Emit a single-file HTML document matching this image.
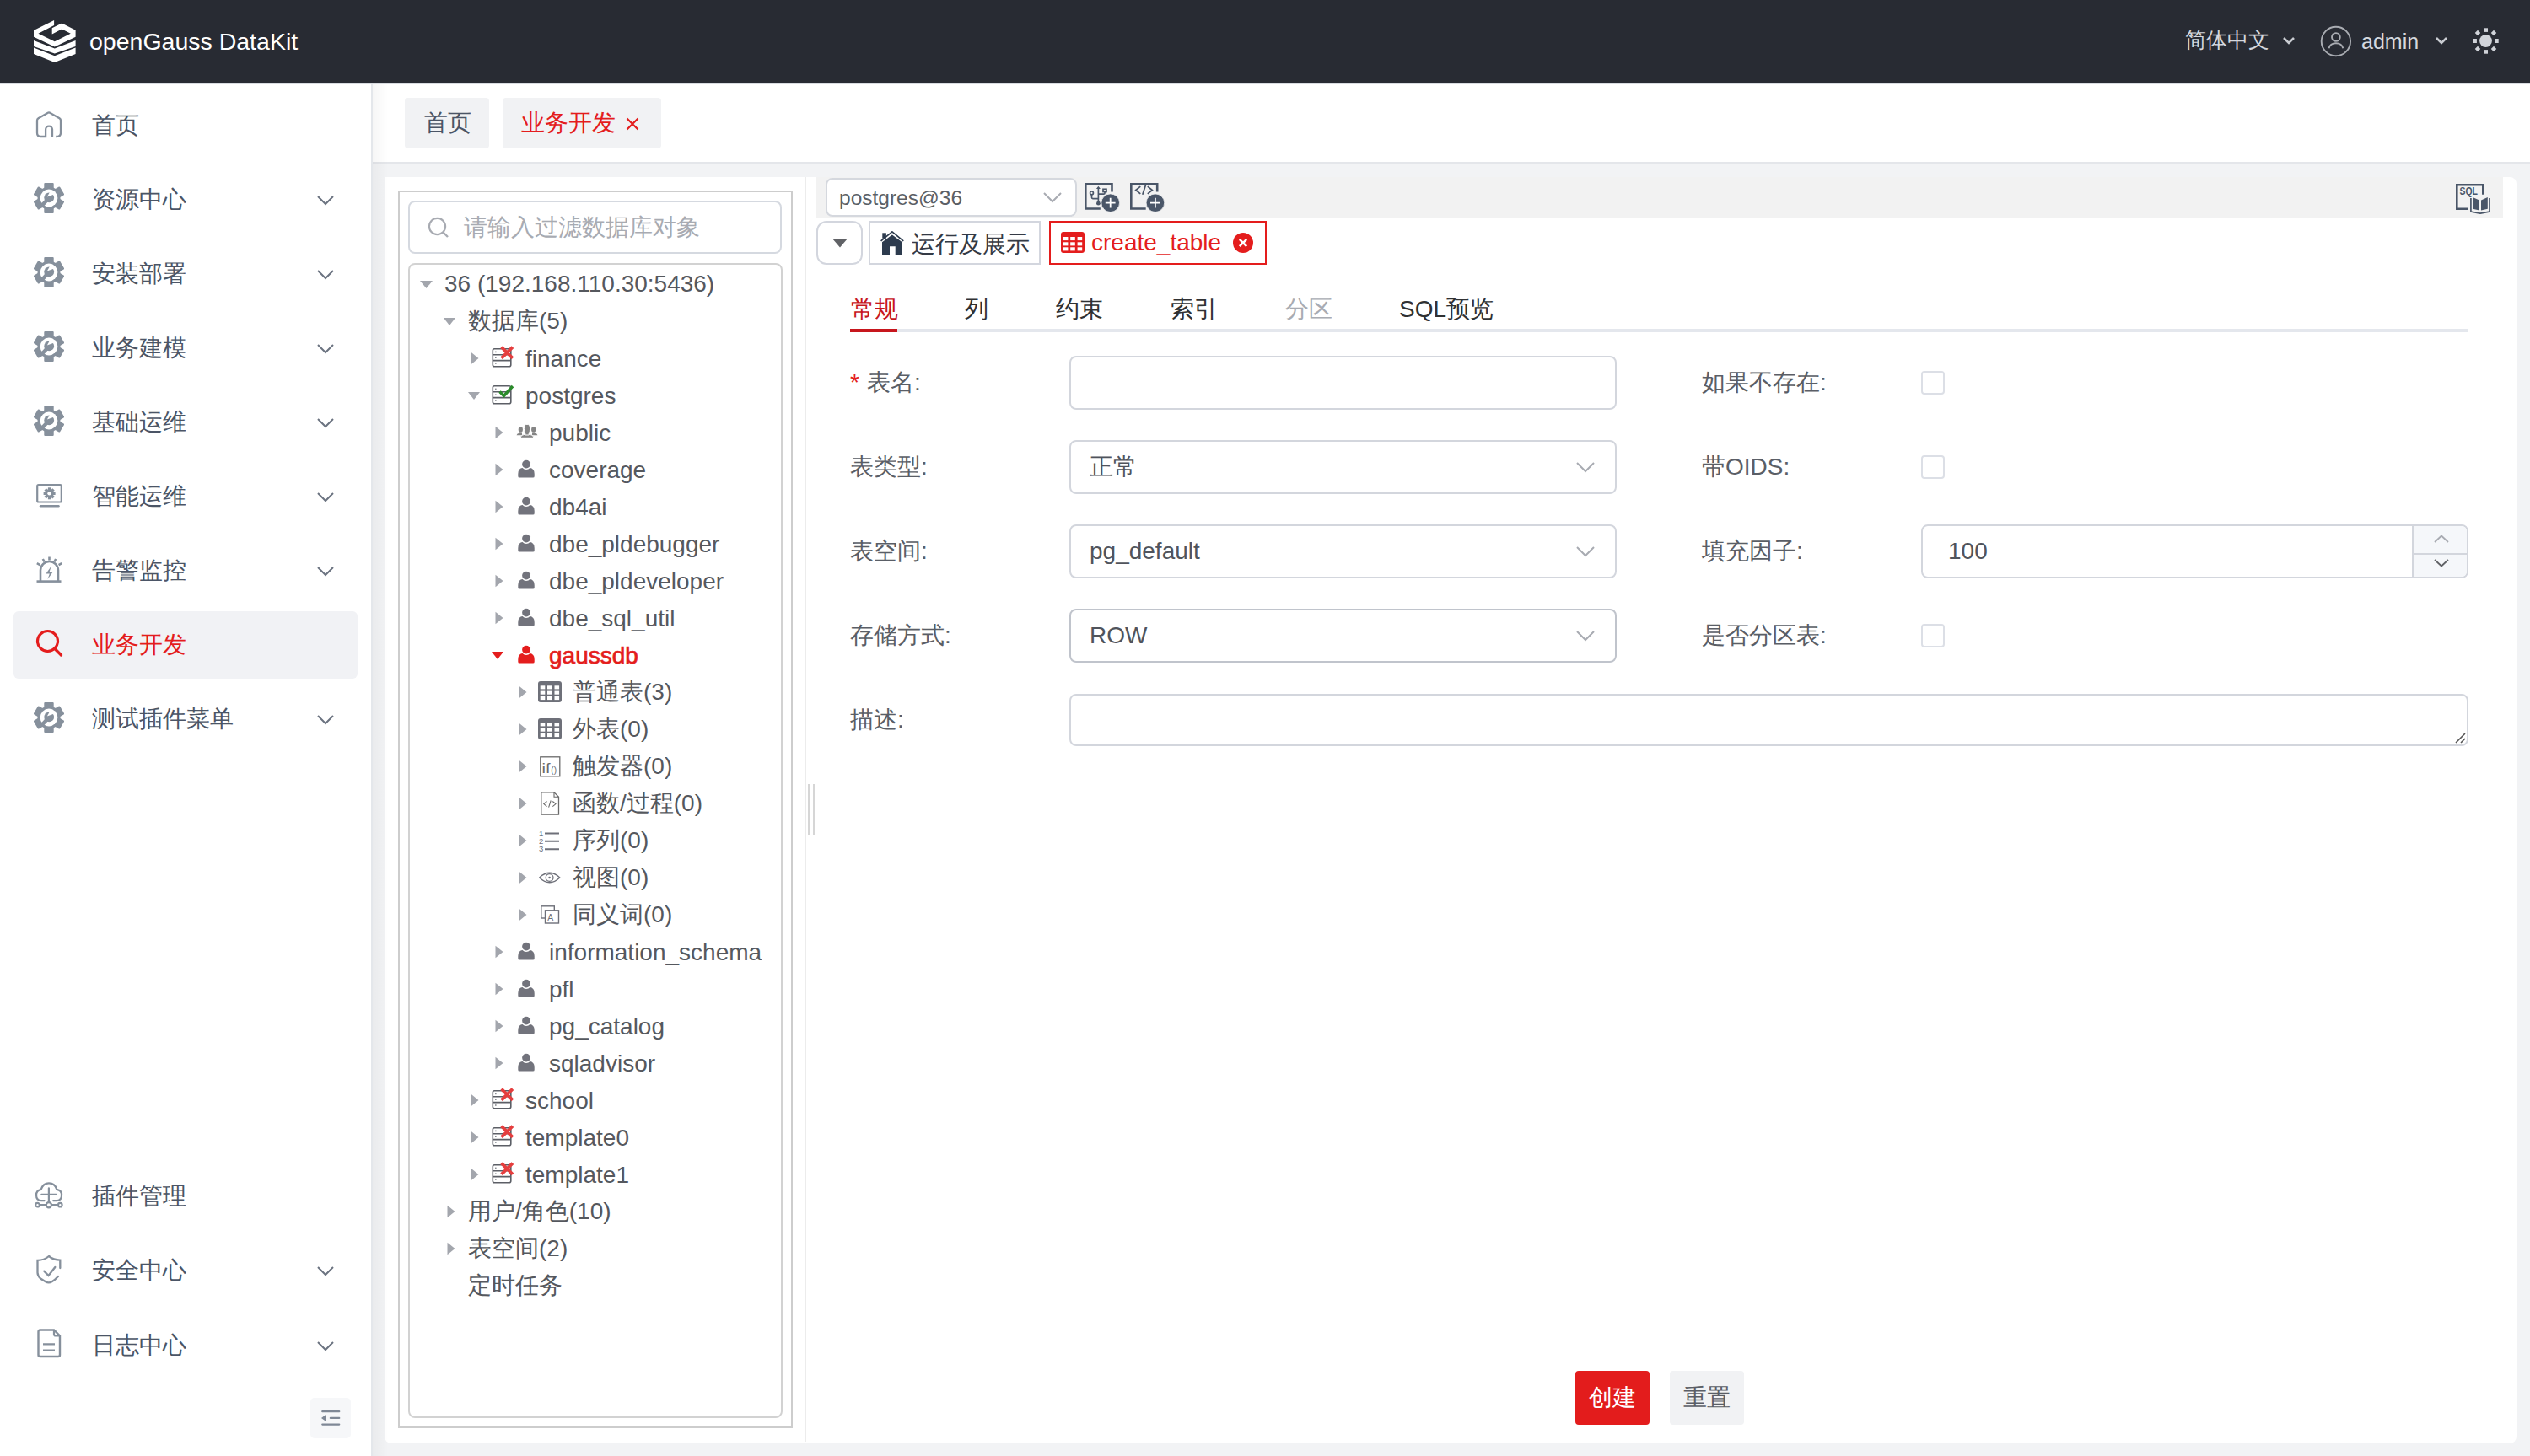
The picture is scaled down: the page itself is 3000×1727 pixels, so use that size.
<!DOCTYPE html>
<html><head><meta charset="utf-8">
<style>
*{box-sizing:border-box;}
html,body{margin:0;padding:0;}
body{width:3000px;height:1727px;overflow:hidden;position:relative;background:#f2f3f5;font-family:"Liberation Sans",sans-serif;color:#4b5566;}
.abs{position:absolute;}
#hdr{left:0;top:0;width:3000px;height:98px;background:#282b33;z-index:5;}
#hdrline{left:0;top:98px;width:3000px;height:2px;background:#d8dbe0;z-index:5;}
#side{left:0;top:0;width:440px;height:1727px;background:#fff;}
#sideline{left:440px;top:100px;width:2px;height:1627px;background:#e4e7eb;}
#sideshadow{left:442px;top:100px;width:18px;height:1627px;background:linear-gradient(to right,rgba(0,0,0,0.035),rgba(0,0,0,0));z-index:3;}
.mi{position:absolute;left:0;width:440px;height:80px;}
.mi .ic{position:absolute;left:40px;top:20px;width:36px;height:36px;}
.mi .tx{position:absolute;left:109px;top:18px;font-size:28px;line-height:44px;color:#4b5566;white-space:nowrap;}
.mi .ch{position:absolute;left:376px;top:35px;width:20px;height:12px;}
#tabbar{left:442px;top:100px;width:2558px;height:92px;background:#fff;}
#tabline{left:442px;top:192px;width:2558px;height:2px;background:#e4e6ea;}
.ptab{position:absolute;top:116px;height:60px;background:#f1f2f4;border-radius:4px;font-size:28px;line-height:60px;}
#panel{left:456px;top:210px;width:2528px;height:1502px;background:#fff;border-radius:0 8px 8px 8px;}

.tt{font-size:28px;line-height:44px;white-space:nowrap;}
.lbl{position:absolute;font-size:28px;line-height:44px;color:#5a5e66;white-space:nowrap;}
.inp{position:absolute;background:#fff;border:2px solid #d3d6dd;border-radius:8px;}
.val{position:absolute;font-size:28px;line-height:44px;color:#50545c;white-space:nowrap;}
.cb{position:absolute;width:28px;height:28px;border:2px solid #dcdfe6;border-radius:4px;background:#fff;}
.stab{position:absolute;top:345px;font-size:28px;line-height:44px;color:#303133;white-space:nowrap;}
</style></head><body>
<div id="hdr" class="abs"><svg class="abs" style="left:40px;top:24px" width="50" height="50" viewBox="0 0 50 50"><g fill="#fff">
<path d="M24.1 0 L0 12.05 V19.8 L24.8 31.6 L49.6 19.8 V11.7 L33.3 3.55 L21.7 9.35 V16.5 L33.3 10.4 L43.8 15.75 L24.8 25.3 L5.4 15.7 L24.1 6.1 Z"/>
<path d="M0 23.9 V30.9 L24.8 39.6 L49.6 30.9 V23.9 L24.8 33.4 Z"/>
<path d="M0 32.6 V40 L24.8 50 L49.6 40 V32.6 L24.8 42.3 Z"/>
</g></svg><div class="abs" style="left:106px;top:27px;font-size:28.5px;line-height:44px;color:#fff;white-space:nowrap;">openGauss DataKit</div><div class="abs" style="left:2591px;top:26px;font-size:24.5px;line-height:44px;color:#d5d8de;white-space:nowrap;">简体中文</div><svg class="abs" style="left:2706px;top:43px" width="16" height="11" viewBox="0 0 16 11"><path d="M2 2 L8 8 L14 2" fill="none" stroke="#c9ccd2" stroke-width="2.6"/></svg><svg class="abs" style="left:2750px;top:29px" width="39" height="39" viewBox="0 0 39 39"><circle cx="19.9" cy="20" r="17.2" fill="none" stroke="#a9acb2" stroke-width="1.9"/><circle cx="19.9" cy="15" r="4.9" fill="none" stroke="#a9acb2" stroke-width="1.9"/><path d="M11.5 28.2 Q13 22.2 19.9 22.2 Q26.8 22.2 28.3 28.2" fill="none" stroke="#a9acb2" stroke-width="1.9"/></svg><div class="abs" style="left:2800px;top:27px;font-size:25px;line-height:44px;color:#d5d8de;white-space:nowrap;">admin</div><svg class="abs" style="left:2887px;top:43px" width="16" height="11" viewBox="0 0 16 11"><path d="M2 2 L8 8 L14 2" fill="none" stroke="#c9ccd2" stroke-width="2.6"/></svg><svg class="abs" style="left:2931px;top:32px" width="34" height="34" viewBox="0 0 34 34"><g fill="#d0d3d9"><circle cx="16.5" cy="16.5" r="7.4"/><rect x="14" y="1.3" width="5" height="4.6"/><rect x="14" y="27.1" width="5" height="4.6"/><rect x="1.3" y="14" width="4.6" height="5"/><rect x="27.1" y="14" width="4.6" height="5"/><rect x="4.7" y="4.7" width="4.6" height="4.6" transform="rotate(45 7 7)"/><rect x="23.7" y="4.7" width="4.6" height="4.6" transform="rotate(45 26 7)"/><rect x="4.7" y="23.7" width="4.6" height="4.6" transform="rotate(45 7 26)"/><rect x="23.7" y="23.7" width="4.6" height="4.6" transform="rotate(45 26 26)"/></g></svg></div>
<div id="hdrline" class="abs"></div>
<div id="side" class="abs"><div class="mi" style="top:109px;"><svg class="ic" style="left:40px;top:20px" viewBox="0 0 36 36"><path d="M22 33.2 V24.6 A3.95 3.95 0 0 0 14.1 24.6 V33 H8.2 Q4 33 4 28.8 V13.8 Q4 12.2 5.5 11.3 L16.4 4.9 Q18 4 19.6 4.9 L30.5 11.3 Q32 12.2 32 13.8 V28.5 Q32 33 27.2 33 H26.2" fill="none" stroke="#86909c" stroke-width="2.3"/></svg><div class="tx">首页</div></div><div class="mi" style="top:197px;"><svg class="ic" viewBox="0 0 36 36"><g fill="#86909c"><circle cx="18" cy="18" r="13.5"/>
<rect x="12.3" y="0" width="11.4" height="8" rx="1"/><rect x="12.3" y="28" width="11.4" height="8" rx="1"/>
<rect x="12.3" y="0" width="11.4" height="8" rx="1" transform="rotate(60 18 18)"/><rect x="12.3" y="0" width="11.4" height="8" rx="1" transform="rotate(120 18 18)"/>
<rect x="12.3" y="0" width="11.4" height="8" rx="1" transform="rotate(240 18 18)"/><rect x="12.3" y="0" width="11.4" height="8" rx="1" transform="rotate(300 18 18)"/></g>
<circle cx="18" cy="18" r="10.4" fill="#fff"/>
<circle cx="18.2" cy="17.4" r="5.9" fill="#86909c"/><path d="M15.9 16.6 L19.3 10.2 L25.5 10.5 L25 13.3 Z" fill="#fff"/>
<path d="M16.5 19.5 L9.5 27" stroke="#86909c" stroke-width="4.4" stroke-linecap="butt"/>
</svg><div class="tx">资源中心</div><svg class="ch" viewBox="0 0 20 12"><path d="M1 1 L10 10 L19 1" fill="none" stroke="#6b7380" stroke-width="2"/></svg></div><div class="mi" style="top:285px;"><svg class="ic" viewBox="0 0 36 36"><g fill="#86909c"><circle cx="18" cy="18" r="13.5"/>
<rect x="12.3" y="0" width="11.4" height="8" rx="1"/><rect x="12.3" y="28" width="11.4" height="8" rx="1"/>
<rect x="12.3" y="0" width="11.4" height="8" rx="1" transform="rotate(60 18 18)"/><rect x="12.3" y="0" width="11.4" height="8" rx="1" transform="rotate(120 18 18)"/>
<rect x="12.3" y="0" width="11.4" height="8" rx="1" transform="rotate(240 18 18)"/><rect x="12.3" y="0" width="11.4" height="8" rx="1" transform="rotate(300 18 18)"/></g>
<circle cx="18" cy="18" r="10.4" fill="#fff"/>
<circle cx="18.2" cy="17.4" r="5.9" fill="#86909c"/><path d="M15.9 16.6 L19.3 10.2 L25.5 10.5 L25 13.3 Z" fill="#fff"/>
<path d="M16.5 19.5 L9.5 27" stroke="#86909c" stroke-width="4.4" stroke-linecap="butt"/>
</svg><div class="tx">安装部署</div><svg class="ch" viewBox="0 0 20 12"><path d="M1 1 L10 10 L19 1" fill="none" stroke="#6b7380" stroke-width="2"/></svg></div><div class="mi" style="top:373px;"><svg class="ic" viewBox="0 0 36 36"><g fill="#86909c"><circle cx="18" cy="18" r="13.5"/>
<rect x="12.3" y="0" width="11.4" height="8" rx="1"/><rect x="12.3" y="28" width="11.4" height="8" rx="1"/>
<rect x="12.3" y="0" width="11.4" height="8" rx="1" transform="rotate(60 18 18)"/><rect x="12.3" y="0" width="11.4" height="8" rx="1" transform="rotate(120 18 18)"/>
<rect x="12.3" y="0" width="11.4" height="8" rx="1" transform="rotate(240 18 18)"/><rect x="12.3" y="0" width="11.4" height="8" rx="1" transform="rotate(300 18 18)"/></g>
<circle cx="18" cy="18" r="10.4" fill="#fff"/>
<circle cx="18.2" cy="17.4" r="5.9" fill="#86909c"/><path d="M15.9 16.6 L19.3 10.2 L25.5 10.5 L25 13.3 Z" fill="#fff"/>
<path d="M16.5 19.5 L9.5 27" stroke="#86909c" stroke-width="4.4" stroke-linecap="butt"/>
</svg><div class="tx">业务建模</div><svg class="ch" viewBox="0 0 20 12"><path d="M1 1 L10 10 L19 1" fill="none" stroke="#6b7380" stroke-width="2"/></svg></div><div class="mi" style="top:461px;"><svg class="ic" viewBox="0 0 36 36"><g fill="#86909c"><circle cx="18" cy="18" r="13.5"/>
<rect x="12.3" y="0" width="11.4" height="8" rx="1"/><rect x="12.3" y="28" width="11.4" height="8" rx="1"/>
<rect x="12.3" y="0" width="11.4" height="8" rx="1" transform="rotate(60 18 18)"/><rect x="12.3" y="0" width="11.4" height="8" rx="1" transform="rotate(120 18 18)"/>
<rect x="12.3" y="0" width="11.4" height="8" rx="1" transform="rotate(240 18 18)"/><rect x="12.3" y="0" width="11.4" height="8" rx="1" transform="rotate(300 18 18)"/></g>
<circle cx="18" cy="18" r="10.4" fill="#fff"/>
<circle cx="18.2" cy="17.4" r="5.9" fill="#86909c"/><path d="M15.9 16.6 L19.3 10.2 L25.5 10.5 L25 13.3 Z" fill="#fff"/>
<path d="M16.5 19.5 L9.5 27" stroke="#86909c" stroke-width="4.4" stroke-linecap="butt"/>
</svg><div class="tx">基础运维</div><svg class="ch" viewBox="0 0 20 12"><path d="M1 1 L10 10 L19 1" fill="none" stroke="#6b7380" stroke-width="2"/></svg></div><div class="mi" style="top:549px;"><svg class="ic" viewBox="0 0 36 36"><rect x="4.2" y="6" width="28.6" height="20.5" rx="1.5" fill="none" stroke="#86909c" stroke-width="2.2"/><path d="M8 31.2 H29.5" stroke="#86909c" stroke-width="2.4" stroke-linecap="round"/><g transform="translate(18.6 16.3)" fill="#86909c"><circle r="5"/><rect x="-1.7" y="-7" width="3.4" height="14"/><rect x="-1.7" y="-7" width="3.4" height="14" transform="rotate(45)"/><rect x="-1.7" y="-7" width="3.4" height="14" transform="rotate(90)"/><rect x="-1.7" y="-7" width="3.4" height="14" transform="rotate(135)"/></g><circle cx="18.6" cy="16.3" r="2.3" fill="#fff"/></svg><div class="tx">智能运维</div><svg class="ch" viewBox="0 0 20 12"><path d="M1 1 L10 10 L19 1" fill="none" stroke="#6b7380" stroke-width="2"/></svg></div><div class="mi" style="top:637px;"><svg class="ic" viewBox="0 0 36 36"><path d="M8 32 V19.5 A10.5 10.5 0 0 1 29 19.5 V32" fill="none" stroke="#86909c" stroke-width="2.6"/><path d="M3.5 32.6 H32.5" stroke="#86909c" stroke-width="2.6"/><path d="M20.8 14.5 L14.5 23.5 H18.8 L16.5 30 L23 21 H18.7 Z" fill="#86909c"/><g stroke="#86909c" stroke-width="2.6"><path d="M18.5 3.5 V7.5"/><path d="M10.8 6 L12.6 9.3"/><path d="M26.2 6 L24.4 9.3"/><path d="M3.8 11.2 L7.4 13.2"/><path d="M33.2 11.2 L29.6 13.2"/></g></svg><div class="tx">告警监控</div><svg class="ch" viewBox="0 0 20 12"><path d="M1 1 L10 10 L19 1" fill="none" stroke="#6b7380" stroke-width="2"/></svg></div><div class="mi" style="top:725px;"><div class="abs" style="left:16px;top:0;width:408px;height:80px;background:#f1f2f5;border-radius:6px;"></div><svg class="ic" viewBox="0 0 36 36"><circle cx="16.5" cy="15.5" r="12" fill="none" stroke="#e41d1d" stroke-width="3.2"/><path d="M25 24.5 L32.5 32" stroke="#e41d1d" stroke-width="3.4" stroke-linecap="round"/></svg><div class="tx" style="color:#e41d1d">业务开发</div></div><div class="mi" style="top:813px;"><svg class="ic" viewBox="0 0 36 36"><g fill="#86909c"><circle cx="18" cy="18" r="13.5"/>
<rect x="12.3" y="0" width="11.4" height="8" rx="1"/><rect x="12.3" y="28" width="11.4" height="8" rx="1"/>
<rect x="12.3" y="0" width="11.4" height="8" rx="1" transform="rotate(60 18 18)"/><rect x="12.3" y="0" width="11.4" height="8" rx="1" transform="rotate(120 18 18)"/>
<rect x="12.3" y="0" width="11.4" height="8" rx="1" transform="rotate(240 18 18)"/><rect x="12.3" y="0" width="11.4" height="8" rx="1" transform="rotate(300 18 18)"/></g>
<circle cx="18" cy="18" r="10.4" fill="#fff"/>
<circle cx="18.2" cy="17.4" r="5.9" fill="#86909c"/><path d="M15.9 16.6 L19.3 10.2 L25.5 10.5 L25 13.3 Z" fill="#fff"/>
<path d="M16.5 19.5 L9.5 27" stroke="#86909c" stroke-width="4.4" stroke-linecap="butt"/>
</svg><div class="tx">测试插件菜单</div><svg class="ch" viewBox="0 0 20 12"><path d="M1 1 L10 10 L19 1" fill="none" stroke="#6b7380" stroke-width="2"/></svg></div><div class="mi" style="top:1379px;"><svg class="ic" viewBox="0 0 36 36"><path d="M12.6 25.2 H9 Q3 25.2 3 18.3 Q3 13 8.7 11.8 Q11 4.3 18 4.3 Q25 4.3 27.4 11.8 Q33.1 13 33.1 18.3 Q33.1 25.2 27 25.2 H23.2" fill="none" stroke="#86909c" stroke-width="2.2" stroke-linecap="round"/><path d="M17.9 10.3 V27 M9.3 17.8 H26.5 M6.5 30.2 H29.3" stroke="#86909c" stroke-width="2.2" stroke-linecap="round"/><circle cx="17.9" cy="30.2" r="3.1" fill="#fff" stroke="#86909c" stroke-width="2.2"/><circle cx="4.5" cy="30.2" r="2.3" fill="#fff" stroke="#86909c" stroke-width="2.2"/><circle cx="31.3" cy="30.2" r="2.3" fill="#fff" stroke="#86909c" stroke-width="2.2"/></svg><div class="tx">插件管理</div></div><div class="mi" style="top:1467px;"><svg class="ic" viewBox="0 0 36 36"><path d="M31.3 17 V7.6 Q23.5 7.6 18 3 Q12.5 7.8 4.5 7.9 V22.5 Q4.5 26 8 29.5 L14 33.3 Q17.8 35.5 21.5 33.3 Q25.2 31 28.9 26.9" fill="none" stroke="#86909c" stroke-width="2.3" stroke-linecap="round"/><path d="M12.3 20.6 L17.5 26 L25.3 16" fill="none" stroke="#86909c" stroke-width="2.3" stroke-linecap="round"/></svg><div class="tx">安全中心</div><svg class="ch" viewBox="0 0 20 12"><path d="M1 1 L10 10 L19 1" fill="none" stroke="#6b7380" stroke-width="2"/></svg></div><div class="mi" style="top:1556px;"><svg class="ic" viewBox="0 0 36 36"><path d="M7.5 1.5 H24 L31 8.5 V31 Q31 33 29 33 H7.5 Q5.5 33 5.5 31 V3.5 Q5.5 1.5 7.5 1.5 Z" fill="none" stroke="#86909c" stroke-width="2.4"/><path d="M24 1.5 V6.5 Q24 8.5 26 8.5 H31" fill="none" stroke="#86909c" stroke-width="2.2"/><path d="M11 18.4 H25 M11 25.6 H25" stroke="#86909c" stroke-width="2.4"/></svg><div class="tx">日志中心</div><svg class="ch" viewBox="0 0 20 12"><path d="M1 1 L10 10 L19 1" fill="none" stroke="#6b7380" stroke-width="2"/></svg></div><div class="abs" style="left:368px;top:1658px;width:48px;height:48px;background:#f6f7f9;border-radius:5px;"><svg class="abs" style="left:12px;top:14px" width="24" height="20" viewBox="0 0 24 20"><path d="M2.3 2.2 H22.2 M11.9 9.9 H22.2 M2.3 17.6 H22.2" stroke="#7f8896" stroke-width="2.3" stroke-linecap="round"/><path d="M1 9.9 L6.5 5.8 V14 Z" fill="#7f8896"/></svg></div></div>
<div id="sideline" class="abs"></div><div id="sideshadow" class="abs"></div>
<div id="tabbar" class="abs">
<div class="abs" style="left:38px;top:16px;width:100px;height:60px;background:#f1f2f4;border-radius:4px;"><div class="abs" style="left:23px;top:8px;font-size:28px;line-height:44px;color:#4b5566;white-space:nowrap;">首页</div></div>
<div class="abs" style="left:154px;top:16px;width:188px;height:60px;background:#f1f2f4;border-radius:4px;"><div class="abs" style="left:22px;top:8px;font-size:28px;line-height:44px;color:#e41d1d;white-space:nowrap;">业务开发</div>
<svg class="abs" style="left:146px;top:23px" width="16" height="16" viewBox="0 0 16 16"><path d="M1.5 1.5 L14.5 14.5 M14.5 1.5 L1.5 14.5" stroke="#e41d1d" stroke-width="2.2"/></svg></div>
</div>
<div id="tabline" class="abs"></div>
<div id="panel" class="abs"></div><div class="abs" style="left:472px;top:226px;width:468px;height:1468px;border:2px solid #cdcdcd;"></div><div class="abs" style="left:484px;top:238px;width:443px;height:63px;border:2px solid #d5d9e0;border-radius:8px;background:#fff;"></div><svg class="abs" style="left:507px;top:257px" width="26" height="26" viewBox="0 0 26 26"><circle cx="11.5" cy="11.5" r="9.6" fill="none" stroke="#a8abb2" stroke-width="2.2"/><path d="M18.5 18.5 L24 24" stroke="#a8abb2" stroke-width="2.4"/></svg><div class="abs tt" style="left:550px;top:248px;color:#a8abb2;">请输入过滤数据库对象</div><div class="abs" style="left:484px;top:312px;width:444px;height:1370px;border:2px solid #d2d2d2;border-radius:8px;"></div><svg class="abs" style="left:498.0px;top:332.5px" width="15" height="9" viewBox="0 0 15 9"><path d="M0 0 H15 L7.5 9 Z" fill="#a3a6ad"/></svg><div class="abs tt" style="left:527px;top:315px;color:#55585e;">36 (192.168.110.30:5436)</div><svg class="abs" style="left:526.0px;top:376.5px" width="14" height="9" viewBox="0 0 14 9"><path d="M0 0 H14 L7.0 9 Z" fill="#a3a6ad"/></svg><div class="abs tt" style="left:555px;top:359px;color:#55585e;">数据库(5)</div><svg class="abs" style="left:558.0px;top:417px" width="10" height="16" viewBox="0 0 10 16"><path d="M0.5 0.8 L9.5 8 L0.5 15.2 Z" fill="#a3a6ad"/></svg><svg class="abs" style="left:583px;top:410px" width="27" height="28" viewBox="0 0 27 28"><g fill="none" stroke="#5c5f66" stroke-width="1.6"><rect x="1.3" y="3.8" width="21.5" height="21" rx="2"/><path d="M1.3 10.8 H22.8 M1.3 17.6 H22.8"/></g><g fill="#8a8d93"><rect x="4" y="6.6" width="1.6" height="1.6"/><rect x="4" y="13.4" width="1.6" height="1.6"/><rect x="4" y="20.2" width="1.6" height="1.6"/></g><path d="M11.6 1.6 L24.9 14.9 M24.9 1.6 L11.6 14.9" stroke="#e53e3e" stroke-width="3.8"/></svg><div class="abs tt" style="left:623px;top:404px;color:#55585e;">finance</div><svg class="abs" style="left:554.5px;top:464.5px" width="14" height="9" viewBox="0 0 14 9"><path d="M0 0 H14 L7.0 9 Z" fill="#a3a6ad"/></svg><svg class="abs" style="left:583px;top:454px" width="27" height="28" viewBox="0 0 27 28"><g fill="none" stroke="#5c5f66" stroke-width="1.6"><rect x="1.3" y="3.8" width="21.5" height="21" rx="2"/><path d="M1.3 10.8 H22.8 M1.3 17.6 H22.8"/></g><g fill="#8a8d93"><rect x="4" y="6.6" width="1.6" height="1.6"/><rect x="4" y="13.4" width="1.6" height="1.6"/><rect x="4" y="20.2" width="1.6" height="1.6"/></g><path d="M9.5 10.5 L14.5 15.5 L25 4" fill="none" stroke="#2a8a2a" stroke-width="3.4"/></svg><div class="abs tt" style="left:623px;top:448px;color:#55585e;">postgres</div><svg class="abs" style="left:586.5px;top:505px" width="10" height="16" viewBox="0 0 10 16"><path d="M0.5 0.8 L9.5 8 L0.5 15.2 Z" fill="#a3a6ad"/></svg><svg class="abs" style="left:612px;top:502px" width="26" height="18" viewBox="0 0 26 18"><g fill="#858585"><ellipse cx="5.3" cy="7.4" rx="2.6" ry="3.4"/><path d="M0.5 14.3 Q1 12 4 11.8 H7 V14.3 Z"/><ellipse cx="20.7" cy="7.4" rx="2.6" ry="3.4"/><path d="M25.5 14.3 Q25 12 22 11.8 H19 V14.3 Z"/></g><g fill="#858585" stroke="#fff" stroke-width="1"><path d="M5 17.3 Q5.6 13.6 10 13.3 H16 Q20.4 13.6 21 17.3 Z"/><path d="M13 1.3 Q16.6 1.3 16.6 6.5 Q16.6 10 15.2 12 V14 H10.8 V12 Q9.4 10 9.4 6.5 Q9.4 1.3 13 1.3 Z"/></g></svg><div class="abs tt" style="left:651px;top:492px;color:#55585e;">public</div><svg class="abs" style="left:586.5px;top:549px" width="10" height="16" viewBox="0 0 10 16"><path d="M0.5 0.8 L9.5 8 L0.5 15.2 Z" fill="#a3a6ad"/></svg><svg class="abs" style="left:614px;top:544px" width="20" height="24" viewBox="0 0 20 24"><path d="M0.3 18 Q0.3 11.5 6 10.8 H14 Q19.7 11.5 19.7 18 V21 Q19.7 22.6 18 22.6 H2 Q0.3 22.6 0.3 21 Z" fill="#72737c"/><circle cx="10" cy="6.6" r="5.6" fill="#72737c" stroke="#fff" stroke-width="1.4"/></svg><div class="abs tt" style="left:651px;top:536px;color:#55585e;">coverage</div><svg class="abs" style="left:586.5px;top:593px" width="10" height="16" viewBox="0 0 10 16"><path d="M0.5 0.8 L9.5 8 L0.5 15.2 Z" fill="#a3a6ad"/></svg><svg class="abs" style="left:614px;top:588px" width="20" height="24" viewBox="0 0 20 24"><path d="M0.3 18 Q0.3 11.5 6 10.8 H14 Q19.7 11.5 19.7 18 V21 Q19.7 22.6 18 22.6 H2 Q0.3 22.6 0.3 21 Z" fill="#72737c"/><circle cx="10" cy="6.6" r="5.6" fill="#72737c" stroke="#fff" stroke-width="1.4"/></svg><div class="abs tt" style="left:651px;top:580px;color:#55585e;">db4ai</div><svg class="abs" style="left:586.5px;top:637px" width="10" height="16" viewBox="0 0 10 16"><path d="M0.5 0.8 L9.5 8 L0.5 15.2 Z" fill="#a3a6ad"/></svg><svg class="abs" style="left:614px;top:632px" width="20" height="24" viewBox="0 0 20 24"><path d="M0.3 18 Q0.3 11.5 6 10.8 H14 Q19.7 11.5 19.7 18 V21 Q19.7 22.6 18 22.6 H2 Q0.3 22.6 0.3 21 Z" fill="#72737c"/><circle cx="10" cy="6.6" r="5.6" fill="#72737c" stroke="#fff" stroke-width="1.4"/></svg><div class="abs tt" style="left:651px;top:624px;color:#55585e;">dbe_pldebugger</div><svg class="abs" style="left:586.5px;top:681px" width="10" height="16" viewBox="0 0 10 16"><path d="M0.5 0.8 L9.5 8 L0.5 15.2 Z" fill="#a3a6ad"/></svg><svg class="abs" style="left:614px;top:676px" width="20" height="24" viewBox="0 0 20 24"><path d="M0.3 18 Q0.3 11.5 6 10.8 H14 Q19.7 11.5 19.7 18 V21 Q19.7 22.6 18 22.6 H2 Q0.3 22.6 0.3 21 Z" fill="#72737c"/><circle cx="10" cy="6.6" r="5.6" fill="#72737c" stroke="#fff" stroke-width="1.4"/></svg><div class="abs tt" style="left:651px;top:668px;color:#55585e;">dbe_pldeveloper</div><svg class="abs" style="left:586.5px;top:725px" width="10" height="16" viewBox="0 0 10 16"><path d="M0.5 0.8 L9.5 8 L0.5 15.2 Z" fill="#a3a6ad"/></svg><svg class="abs" style="left:614px;top:720px" width="20" height="24" viewBox="0 0 20 24"><path d="M0.3 18 Q0.3 11.5 6 10.8 H14 Q19.7 11.5 19.7 18 V21 Q19.7 22.6 18 22.6 H2 Q0.3 22.6 0.3 21 Z" fill="#72737c"/><circle cx="10" cy="6.6" r="5.6" fill="#72737c" stroke="#fff" stroke-width="1.4"/></svg><div class="abs tt" style="left:651px;top:712px;color:#55585e;">dbe_sql_util</div><svg class="abs" style="left:583.0px;top:772.5px" width="14" height="9" viewBox="0 0 14 9"><path d="M0 0 H14 L7.0 9 Z" fill="#e41d1d"/></svg><svg class="abs" style="left:614px;top:764px" width="20" height="24" viewBox="0 0 20 24"><path d="M0.3 18 Q0.3 11.5 6 10.8 H14 Q19.7 11.5 19.7 18 V21 Q19.7 22.6 18 22.6 H2 Q0.3 22.6 0.3 21 Z" fill="#e41d1d"/><circle cx="10" cy="6.6" r="5.6" fill="#e41d1d" stroke="#fff" stroke-width="1.4"/></svg><div class="abs tt" style="left:651px;top:756px;color:#e41d1d;-webkit-text-stroke:0.7px #e41d1d;">gaussdb</div><svg class="abs" style="left:615.0px;top:813px" width="10" height="16" viewBox="0 0 10 16"><path d="M0.5 0.8 L9.5 8 L0.5 15.2 Z" fill="#a3a6ad"/></svg><svg class="abs" style="left:638px;top:808px" width="28" height="25" viewBox="0 0 28 25"><rect x="0" y="0" width="28" height="25" rx="3" fill="#6e7079"/><rect x="2.7" y="5.3" width="5.6" height="4.1" fill="#fff"/><rect x="11" y="5.3" width="5.6" height="4.1" fill="#fff"/><rect x="19.5" y="5.3" width="5.6" height="4.1" fill="#fff"/><rect x="2.7" y="11.6" width="5.6" height="4.1" fill="#fff"/><rect x="11" y="11.6" width="5.6" height="4.1" fill="#fff"/><rect x="19.5" y="11.6" width="5.6" height="4.1" fill="#fff"/><rect x="2.7" y="18" width="5.6" height="4.1" fill="#fff"/><rect x="11" y="18" width="5.6" height="4.1" fill="#fff"/><rect x="19.5" y="18" width="5.6" height="4.1" fill="#fff"/></svg><div class="abs tt" style="left:679px;top:799px;color:#55585e;">普通表(3)</div><svg class="abs" style="left:615.0px;top:857px" width="10" height="16" viewBox="0 0 10 16"><path d="M0.5 0.8 L9.5 8 L0.5 15.2 Z" fill="#a3a6ad"/></svg><svg class="abs" style="left:638px;top:852px" width="28" height="25" viewBox="0 0 28 25"><rect x="0" y="0" width="28" height="25" rx="3" fill="#6e7079"/><rect x="2.7" y="5.3" width="5.6" height="4.1" fill="#fff"/><rect x="11" y="5.3" width="5.6" height="4.1" fill="#fff"/><rect x="19.5" y="5.3" width="5.6" height="4.1" fill="#fff"/><rect x="2.7" y="11.6" width="5.6" height="4.1" fill="#fff"/><rect x="11" y="11.6" width="5.6" height="4.1" fill="#fff"/><rect x="19.5" y="11.6" width="5.6" height="4.1" fill="#fff"/><rect x="2.7" y="18" width="5.6" height="4.1" fill="#fff"/><rect x="11" y="18" width="5.6" height="4.1" fill="#fff"/><rect x="19.5" y="18" width="5.6" height="4.1" fill="#fff"/></svg><div class="abs tt" style="left:679px;top:843px;color:#55585e;">外表(0)</div><svg class="abs" style="left:615.0px;top:901px" width="10" height="16" viewBox="0 0 10 16"><path d="M0.5 0.8 L9.5 8 L0.5 15.2 Z" fill="#a3a6ad"/></svg><svg class="abs" style="left:640px;top:896.5px" width="25" height="25" viewBox="0 0 25 25"><rect x="0.8" y="0.8" width="23" height="23" fill="none" stroke="#6a6a6a" stroke-width="1.3"/><text x="2.5" y="19.5" font-family="Liberation Sans" font-size="17" fill="#6a6a6a" textLength="10" lengthAdjust="spacingAndGlyphs">if</text><text x="13.3" y="19.5" font-family="Liberation Sans" font-size="10" fill="#6a6a6a">()</text></svg><div class="abs tt" style="left:679px;top:887px;color:#55585e;">触发器(0)</div><svg class="abs" style="left:615.0px;top:945px" width="10" height="16" viewBox="0 0 10 16"><path d="M0.5 0.8 L9.5 8 L0.5 15.2 Z" fill="#a3a6ad"/></svg><svg class="abs" style="left:641px;top:939px" width="23" height="29" viewBox="0 0 23 29"><path d="M0.8 0.8 H16 L21.5 6.3 V27.2 H0.8 Z" fill="none" stroke="#6a6a6a" stroke-width="1.3"/><path d="M16 0.8 V6.3 H21.5" fill="none" stroke="#6a6a6a" stroke-width="1.1"/><path d="M7.5 11.5 L3.8 14.6 L7.5 17.7 M14.3 11.5 L18 14.6 L14.3 17.7 M12.2 10.5 L9.6 18.7" fill="none" stroke="#6a6a6a" stroke-width="1.1"/></svg><div class="abs tt" style="left:679px;top:931px;color:#55585e;">函数/过程(0)</div><svg class="abs" style="left:615.0px;top:989px" width="10" height="16" viewBox="0 0 10 16"><path d="M0.5 0.8 L9.5 8 L0.5 15.2 Z" fill="#a3a6ad"/></svg><svg class="abs" style="left:639px;top:983px" width="25" height="28" viewBox="0 0 25 28"><g font-family="Liberation Sans" font-size="9.5" fill="#6e7079"><text x="0" y="8.5">1</text><text x="0" y="18">2</text><text x="0" y="27">3</text></g><g stroke="#6e7079" stroke-width="2"><path d="M7 5.4 H24 M7 14.8 H24 M7 24.2 H24"/></g></svg><div class="abs tt" style="left:679px;top:975px;color:#55585e;">序列(0)</div><svg class="abs" style="left:615.0px;top:1033px" width="10" height="16" viewBox="0 0 10 16"><path d="M0.5 0.8 L9.5 8 L0.5 15.2 Z" fill="#a3a6ad"/></svg><svg class="abs" style="left:639px;top:1032px" width="26" height="18" viewBox="0 0 26 18"><path d="M0.6 9 Q12.7 -2.5 24.8 9 Q12.7 20.5 0.6 9 Z" fill="none" stroke="#6e7079" stroke-width="1.3"/><circle cx="12.6" cy="9" r="4.4" fill="none" stroke="#6e7079" stroke-width="1.3"/><circle cx="12.6" cy="9" r="1.3" fill="#6e7079"/></svg><div class="abs tt" style="left:679px;top:1019px;color:#55585e;">视图(0)</div><svg class="abs" style="left:615.0px;top:1077px" width="10" height="16" viewBox="0 0 10 16"><path d="M0.5 0.8 L9.5 8 L0.5 15.2 Z" fill="#a3a6ad"/></svg><svg class="abs" style="left:641px;top:1074px" width="23" height="22" viewBox="0 0 23 22"><rect x="0.8" y="0.8" width="15.5" height="14.2" fill="none" stroke="#6e7079" stroke-width="1.4"/><rect x="5.5" y="5.8" width="16" height="15.2" fill="#fff" stroke="#6e7079" stroke-width="1.4"/><text x="8.3" y="18" font-family="Liberation Sans" font-size="10.5" fill="#6e7079">A</text></svg><div class="abs tt" style="left:679px;top:1063px;color:#55585e;">同义词(0)</div><svg class="abs" style="left:586.5px;top:1121px" width="10" height="16" viewBox="0 0 10 16"><path d="M0.5 0.8 L9.5 8 L0.5 15.2 Z" fill="#a3a6ad"/></svg><svg class="abs" style="left:614px;top:1116px" width="20" height="24" viewBox="0 0 20 24"><path d="M0.3 18 Q0.3 11.5 6 10.8 H14 Q19.7 11.5 19.7 18 V21 Q19.7 22.6 18 22.6 H2 Q0.3 22.6 0.3 21 Z" fill="#72737c"/><circle cx="10" cy="6.6" r="5.6" fill="#72737c" stroke="#fff" stroke-width="1.4"/></svg><div class="abs tt" style="left:651px;top:1108px;color:#55585e;">information_schema</div><svg class="abs" style="left:586.5px;top:1165px" width="10" height="16" viewBox="0 0 10 16"><path d="M0.5 0.8 L9.5 8 L0.5 15.2 Z" fill="#a3a6ad"/></svg><svg class="abs" style="left:614px;top:1160px" width="20" height="24" viewBox="0 0 20 24"><path d="M0.3 18 Q0.3 11.5 6 10.8 H14 Q19.7 11.5 19.7 18 V21 Q19.7 22.6 18 22.6 H2 Q0.3 22.6 0.3 21 Z" fill="#72737c"/><circle cx="10" cy="6.6" r="5.6" fill="#72737c" stroke="#fff" stroke-width="1.4"/></svg><div class="abs tt" style="left:651px;top:1152px;color:#55585e;">pfl</div><svg class="abs" style="left:586.5px;top:1209px" width="10" height="16" viewBox="0 0 10 16"><path d="M0.5 0.8 L9.5 8 L0.5 15.2 Z" fill="#a3a6ad"/></svg><svg class="abs" style="left:614px;top:1204px" width="20" height="24" viewBox="0 0 20 24"><path d="M0.3 18 Q0.3 11.5 6 10.8 H14 Q19.7 11.5 19.7 18 V21 Q19.7 22.6 18 22.6 H2 Q0.3 22.6 0.3 21 Z" fill="#72737c"/><circle cx="10" cy="6.6" r="5.6" fill="#72737c" stroke="#fff" stroke-width="1.4"/></svg><div class="abs tt" style="left:651px;top:1196px;color:#55585e;">pg_catalog</div><svg class="abs" style="left:586.5px;top:1253px" width="10" height="16" viewBox="0 0 10 16"><path d="M0.5 0.8 L9.5 8 L0.5 15.2 Z" fill="#a3a6ad"/></svg><svg class="abs" style="left:614px;top:1248px" width="20" height="24" viewBox="0 0 20 24"><path d="M0.3 18 Q0.3 11.5 6 10.8 H14 Q19.7 11.5 19.7 18 V21 Q19.7 22.6 18 22.6 H2 Q0.3 22.6 0.3 21 Z" fill="#72737c"/><circle cx="10" cy="6.6" r="5.6" fill="#72737c" stroke="#fff" stroke-width="1.4"/></svg><div class="abs tt" style="left:651px;top:1240px;color:#55585e;">sqladvisor</div><svg class="abs" style="left:558.0px;top:1297px" width="10" height="16" viewBox="0 0 10 16"><path d="M0.5 0.8 L9.5 8 L0.5 15.2 Z" fill="#a3a6ad"/></svg><svg class="abs" style="left:583px;top:1290px" width="27" height="28" viewBox="0 0 27 28"><g fill="none" stroke="#5c5f66" stroke-width="1.6"><rect x="1.3" y="3.8" width="21.5" height="21" rx="2"/><path d="M1.3 10.8 H22.8 M1.3 17.6 H22.8"/></g><g fill="#8a8d93"><rect x="4" y="6.6" width="1.6" height="1.6"/><rect x="4" y="13.4" width="1.6" height="1.6"/><rect x="4" y="20.2" width="1.6" height="1.6"/></g><path d="M11.6 1.6 L24.9 14.9 M24.9 1.6 L11.6 14.9" stroke="#e53e3e" stroke-width="3.8"/></svg><div class="abs tt" style="left:623px;top:1284px;color:#55585e;">school</div><svg class="abs" style="left:558.0px;top:1341px" width="10" height="16" viewBox="0 0 10 16"><path d="M0.5 0.8 L9.5 8 L0.5 15.2 Z" fill="#a3a6ad"/></svg><svg class="abs" style="left:583px;top:1334px" width="27" height="28" viewBox="0 0 27 28"><g fill="none" stroke="#5c5f66" stroke-width="1.6"><rect x="1.3" y="3.8" width="21.5" height="21" rx="2"/><path d="M1.3 10.8 H22.8 M1.3 17.6 H22.8"/></g><g fill="#8a8d93"><rect x="4" y="6.6" width="1.6" height="1.6"/><rect x="4" y="13.4" width="1.6" height="1.6"/><rect x="4" y="20.2" width="1.6" height="1.6"/></g><path d="M11.6 1.6 L24.9 14.9 M24.9 1.6 L11.6 14.9" stroke="#e53e3e" stroke-width="3.8"/></svg><div class="abs tt" style="left:623px;top:1328px;color:#55585e;">template0</div><svg class="abs" style="left:558.0px;top:1385px" width="10" height="16" viewBox="0 0 10 16"><path d="M0.5 0.8 L9.5 8 L0.5 15.2 Z" fill="#a3a6ad"/></svg><svg class="abs" style="left:583px;top:1378px" width="27" height="28" viewBox="0 0 27 28"><g fill="none" stroke="#5c5f66" stroke-width="1.6"><rect x="1.3" y="3.8" width="21.5" height="21" rx="2"/><path d="M1.3 10.8 H22.8 M1.3 17.6 H22.8"/></g><g fill="#8a8d93"><rect x="4" y="6.6" width="1.6" height="1.6"/><rect x="4" y="13.4" width="1.6" height="1.6"/><rect x="4" y="20.2" width="1.6" height="1.6"/></g><path d="M11.6 1.6 L24.9 14.9 M24.9 1.6 L11.6 14.9" stroke="#e53e3e" stroke-width="3.8"/></svg><div class="abs tt" style="left:623px;top:1372px;color:#55585e;">template1</div><svg class="abs" style="left:529.5px;top:1429px" width="10" height="16" viewBox="0 0 10 16"><path d="M0.5 0.8 L9.5 8 L0.5 15.2 Z" fill="#a3a6ad"/></svg><div class="abs tt" style="left:555px;top:1415px;color:#55585e;">用户/角色(10)</div><svg class="abs" style="left:529.5px;top:1473px" width="10" height="16" viewBox="0 0 10 16"><path d="M0.5 0.8 L9.5 8 L0.5 15.2 Z" fill="#a3a6ad"/></svg><div class="abs tt" style="left:555px;top:1459px;color:#55585e;">表空间(2)</div><div class="abs tt" style="left:555px;top:1503px;color:#55585e;">定时任务</div><div class="abs" style="left:954px;top:210px;width:2px;height:1500px;background:#ececec;"></div><div class="abs" style="left:958px;top:930px;width:2px;height:60px;background:#d6d6d6;"></div><div class="abs" style="left:964px;top:930px;width:2px;height:60px;background:#d6d6d6;"></div><div class="abs" style="left:968px;top:210px;width:2000px;height:48px;background:#f2f2f2;"></div><div class="abs" style="left:979px;top:211px;width:298px;height:46px;border:2px solid #d5d8de;border-radius:8px;background:#fff;"></div><div class="abs" style="left:995px;top:213px;font-size:24.5px;line-height:44px;color:#5b5f66;white-space:nowrap;">postgres@36</div><svg class="abs" style="left:1237px;top:228px" width="22" height="13" viewBox="0 0 22 13"><path d="M1 1 L11 11 L21 1" fill="none" stroke="#a8abb2" stroke-width="2"/></svg><svg class="abs" style="left:1286px;top:217px" width="42" height="36" viewBox="0 0 42 36"><path d="M18.8 30.5 H1.3 V1.3 H32.5 V10.6" fill="none" stroke="#4a5668" stroke-width="2.6"/><g stroke="#4a5668" stroke-width="1.7" fill="none"><path d="M16.4 5.5 V24"/><circle cx="8.5" cy="11.9" r="1.9"/><path d="M8.5 13.8 V17.3 Q8.5 18.6 9.8 18.6 H16.4"/><path d="M24 10.6 V12 Q24 13.2 22.8 13.2 H16.4"/><rect x="22" y="7.3" width="4" height="3.2"/></g><path d="M16.4 3.7 L13.9 6.9 H18.9 Z" fill="#4a5668"/><circle cx="16.4" cy="24.2" r="2.4" fill="#4a5668"/><circle cx="30.7" cy="23.7" r="10.8" fill="#4a5668" stroke="#f2f2f2" stroke-width="0.8"/><path d="M30.7 17.8 V29.6 M24.8 23.7 H36.6" stroke="#fff" stroke-width="1.8"/></svg><svg class="abs" style="left:1340px;top:217px" width="42" height="36" viewBox="0 0 42 36"><path d="M18.7 30.5 H1.3 V1.3 H32.2 V10.6" fill="none" stroke="#4a5668" stroke-width="2.6"/><path d="M12.3 4.1 L6.8 8.5 L12.3 12.9 M20.8 4.1 L26.3 8.5 L20.8 12.9 M18.5 2.5 L14.8 13.8" fill="none" stroke="#4a5668" stroke-width="1.8"/><circle cx="29.9" cy="23.7" r="10.8" fill="#4a5668" stroke="#f2f2f2" stroke-width="0.8"/><path d="M29.9 17.8 V29.6 M24 23.7 H35.8" stroke="#fff" stroke-width="1.8"/></svg><svg class="abs" style="left:2912px;top:218px" width="42" height="36" viewBox="0 0 42 36"><path d="M14 29.7 H1.3 V1.3 H32.3 V12.8" fill="none" stroke="#4a5668" stroke-width="2.6"/><text x="4.5" y="13.4" font-family="Liberation Sans" font-weight="bold" font-size="12" fill="#4a5668" textLength="21.5" lengthAdjust="spacingAndGlyphs">SQL</text><path d="M20 16 L28 19.5 V31.6 L20 29.8 Z M30 19.5 L37.8 16 V29.8 L30 31.6 Z" fill="#4a5668"/><path d="M17.9 17 V33 L29 35.2 L40 33 V17" fill="none" stroke="#4a5668" stroke-width="1.7"/></svg><div class="abs" style="left:968px;top:262px;width:55px;height:52px;border:2px solid #d3d6de;border-radius:12px;background:#fff;"></div><svg class="abs" style="left:987px;top:283px" width="18" height="11" viewBox="0 0 18 11"><path d="M0 0 H18 L9 10.5 Z" fill="#606266"/></svg><div class="abs" style="left:1030px;top:262px;width:204px;height:52px;border:2px solid #d3d6de;background:#fff;"></div><svg class="abs" style="left:1044px;top:274px" width="28" height="29" viewBox="0 0 28 29"><path d="M0.6 11.8 L13.9 0.9 L27.3 11.8" fill="none" stroke="#2d3b4e" stroke-width="1.7"/><rect x="2.3" y="2.3" width="4.6" height="6.5" fill="#2d3b4e"/><path d="M2 28 V13.2 L13.9 4.6 L25.8 13.2 V28 H17.7 V18.3 H11 V28 Z" fill="#2d3b4e"/></svg><div class="abs" style="left:1081px;top:268px;font-size:28px;line-height:44px;color:#343a45;white-space:nowrap;">运行及展示</div><div class="abs" style="left:1244px;top:262px;width:258px;height:52px;border:2px solid #e41d1d;background:#fff;"></div><svg class="abs" style="left:1258px;top:275px" width="28" height="25" viewBox="0 0 28 25"><rect x="0" y="0" width="28" height="25" rx="3" fill="#e41d1d"/><rect x="2.8" y="6" width="5.6" height="4.1" fill="#fff"/><rect x="11.2" y="6" width="5.6" height="4.1" fill="#fff"/><rect x="19.6" y="6" width="5.6" height="4.1" fill="#fff"/><rect x="2.8" y="12.3" width="5.6" height="4.1" fill="#fff"/><rect x="11.2" y="12.3" width="5.6" height="4.1" fill="#fff"/><rect x="19.6" y="12.3" width="5.6" height="4.1" fill="#fff"/><rect x="2.8" y="18.3" width="5.6" height="4.1" fill="#fff"/><rect x="11.2" y="18.3" width="5.6" height="4.1" fill="#fff"/><rect x="19.6" y="18.3" width="5.6" height="4.1" fill="#fff"/></svg><div class="abs" style="left:1294px;top:266px;font-size:28px;line-height:44px;color:#e41d1d;white-space:nowrap;">create_table</div><svg class="abs" style="left:1462px;top:276px" width="24" height="24" viewBox="0 0 24 24"><circle cx="12" cy="12" r="12" fill="#e41d1d"/><path d="M7.8 7.8 L16.2 16.2 M16.2 7.8 L7.8 16.2" stroke="#fff" stroke-width="2.6"/></svg><div class="abs" style="left:1008px;top:390px;width:1919px;height:4px;background:#e4e7ed;"></div><div class="abs" style="left:1008px;top:390px;width:56px;height:4px;background:#c7161d;"></div><div class="stab" style="left:1009px;color:#c7161d;">常规</div><div class="stab" style="left:1144px;color:#303133;">列</div><div class="stab" style="left:1252px;color:#303133;">约束</div><div class="stab" style="left:1388px;color:#303133;">索引</div><div class="stab" style="left:1524px;color:#a8abb2;">分区</div><div class="stab" style="left:1659px;color:#303133;">SQL预览</div><div class="lbl" style="left:1008px;top:432px;color:#e41d1d;">*</div><div class="lbl" style="left:1028px;top:432px;">表名:</div><div class="inp" style="left:1268px;top:422px;width:649px;height:64px;border-color:#d3d6dd;"></div><div class="lbl" style="left:1008px;top:532px;">表类型:</div><div class="inp" style="left:1268px;top:522px;width:649px;height:64px;border-color:#d3d6dd;"></div><div class="val" style="left:1292px;top:532px;">正常</div><svg class="abs" style="left:1869px;top:548px" width="22" height="13" viewBox="0 0 22 13"><path d="M1 1 L11 11 L21 1" fill="none" stroke="#a8abb2" stroke-width="2"/></svg><div class="lbl" style="left:1008px;top:632px;">表空间:</div><div class="inp" style="left:1268px;top:622px;width:649px;height:64px;border-color:#d3d6dd;"></div><div class="val" style="left:1292px;top:632px;">pg_default</div><svg class="abs" style="left:1869px;top:648px" width="22" height="13" viewBox="0 0 22 13"><path d="M1 1 L11 11 L21 1" fill="none" stroke="#a8abb2" stroke-width="2"/></svg><div class="lbl" style="left:1008px;top:732px;">存储方式:</div><div class="inp" style="left:1268px;top:722px;width:649px;height:64px;border-color:#c0c4cc;"></div><div class="val" style="left:1292px;top:732px;">ROW</div><svg class="abs" style="left:1869px;top:748px" width="22" height="13" viewBox="0 0 22 13"><path d="M1 1 L11 11 L21 1" fill="none" stroke="#a8abb2" stroke-width="2"/></svg><div class="lbl" style="left:2018px;top:432px;">如果不存在:</div><div class="lbl" style="left:2018px;top:532px;">带OIDS:</div><div class="lbl" style="left:2018px;top:632px;">填充因子:</div><div class="lbl" style="left:2018px;top:732px;">是否分区表:</div><div class="cb" style="left:2278px;top:440px;"></div><div class="cb" style="left:2278px;top:540px;"></div><div class="cb" style="left:2278px;top:740px;"></div><div class="inp" style="left:2278px;top:622px;width:649px;height:64px;overflow:hidden;"><div class="abs" style="left:580px;top:0;width:67px;height:60px;background:#f5f7fa;border-left:2px solid #d3d6dd;"><div class="abs" style="left:0;top:32px;width:65px;height:2px;background:#d3d6dd;"></div><svg class="abs" style="left:24px;top:10px" width="18" height="10" viewBox="0 0 18 10"><path d="M1 9 L9 1.5 L17 9" fill="none" stroke="#a8abb2" stroke-width="1.8"/></svg><svg class="abs" style="left:24px;top:39px" width="18" height="10" viewBox="0 0 18 10"><path d="M1 1 L9 8.5 L17 1" fill="none" stroke="#606266" stroke-width="1.8"/></svg></div></div><div class="val" style="left:2310px;top:632px;">100</div><div class="lbl" style="left:1008px;top:832px;">描述:</div><div class="inp" style="left:1268px;top:823px;width:1659px;height:62px;"></div><svg class="abs" style="left:2908px;top:866px" width="16" height="16" viewBox="0 0 16 16"><path d="M15 4 L4 15 M15 10 L10 15" stroke="#555" stroke-width="1.6"/></svg><div class="abs" style="left:1868px;top:1626px;width:88px;height:64px;background:#e31c1c;border-radius:4px;"><div class="abs" style="left:16px;top:10px;font-size:28px;line-height:44px;color:#fff;white-space:nowrap;">创建</div></div><div class="abs" style="left:1980px;top:1626px;width:88px;height:64px;background:#f1f2f4;border-radius:4px;"><div class="abs" style="left:16px;top:10px;font-size:28px;line-height:44px;color:#5a5e66;white-space:nowrap;">重置</div></div>
</body></html>
